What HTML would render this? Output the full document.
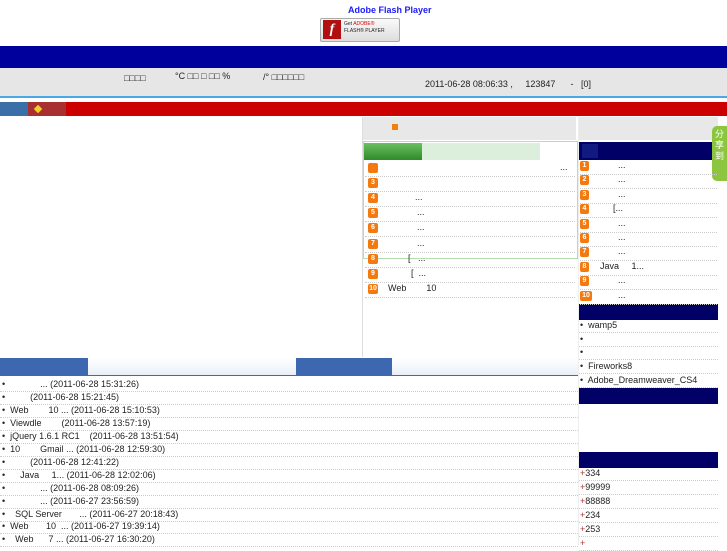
<!DOCTYPE html>
<html><head><meta charset="utf-8"><style>
*{margin:0;padding:0;box-sizing:border-box}
body{width:727px;height:545px;overflow:hidden;background:#fff;font-family:"Liberation Sans","Noto Sans CJK SC",sans-serif;font-size:9px;color:#222;position:relative}
.a{position:absolute}
.t{position:absolute;white-space:nowrap;font-size:9px;line-height:11px}
.num{position:absolute;width:10px;height:10px;background:#f47a10;border-radius:2px;color:#fff;font-size:7px;line-height:10px;text-align:center;font-weight:bold}
.dl{position:absolute;height:0;border-top:1px dotted #ccc}
.navy{position:absolute;background:#000066}
</style></head><body>
<div class="t" style="left:348px;top:5px;color:#1a1aff;font-weight:bold;font-size:9px">Adobe Flash Player</div>
<div class="a" style="left:320px;top:18px;width:80px;height:24px;background:linear-gradient(#fafafa,#ddd);border:1px solid #aaa;border-radius:2px"></div>
<div class="a" style="left:323px;top:20px;width:18px;height:19px;background:#b01010;color:#fff;font:italic bold 14px 'Liberation Serif',serif;text-align:center;line-height:19px">f</div>
<div class="t" style="left:344px;top:21px;font-size:5px;line-height:7px">Get <span style="color:#d00">ADOBE®</span><br>FLASH® PLAYER</div>
<div class="a" style="left:0;top:46px;width:727px;height:22px;background:#00009c"></div>
<div class="a" style="left:0;top:68px;width:727px;height:29px;background:#e6e6e6"></div>
<div class="a" style="left:0;top:96px;width:727px;height:2px;background:#4aa8e8"></div>
<div class="t" style="left:124px;top:73px">□□□□</div>
<div class="t" style="left:175px;top:71px">°C □□ □ □□ %</div>
<div class="t" style="left:263px;top:72px">/° □□□□□□</div>
<div class="t" style="left:425px;top:79px">2011-06-28 08:06:33 ,&nbsp;&nbsp;&nbsp;&nbsp; 123847 &nbsp;&nbsp;&nbsp;&nbsp; - &nbsp;&nbsp;[0]</div>
<div class="a" style="left:0;top:102px;width:727px;height:14px;background:#cc0000"></div>
<div class="a" style="left:0;top:102px;width:28px;height:14px;background:#3a6fa8"></div>
<div class="a" style="left:28px;top:102px;width:38px;height:14px;background:#a83030"></div>
<div class="a" style="left:35px;top:106px;width:6px;height:6px;background:#f0d020;transform:rotate(45deg)"></div>
<!-- left main -->
<div class="a" style="left:362px;top:117px;width:1px;height:240px;background:#ddd"></div>
<!-- middle column -->
<div class="a" style="left:363px;top:117px;width:213px;height:23px;background:#e8e8e8"></div>
<div class="a" style="left:392px;top:124px;width:6px;height:6px;background:#f08010"></div>
<div class="a" style="left:363px;top:141px;width:215px;height:118px;border:1px solid #b5deb0"></div>
<div class="a" style="left:364px;top:143px;width:176px;height:17px;background:#dcefdd"></div>
<div class="a" style="left:364px;top:143px;width:58px;height:17px;background:linear-gradient(#6cc060,#2e8a2a)"></div>
<div id="mid"></div>
<!-- right column -->
<div class="a" style="left:579px;top:117px;width:139px;height:23px;background:#e8e8e8"></div>
<div class="navy" style="left:579px;top:142px;width:139px;height:18px"></div>
<div class="a" style="left:582px;top:144px;width:16px;height:14px;background:#101a80"></div>
<div class="navy" style="left:579px;top:304px;width:139px;height:16px"></div>
<div class="navy" style="left:579px;top:388px;width:139px;height:16px"></div>
<div class="navy" style="left:579px;top:452px;width:139px;height:16px"></div>
<div class="a" style="left:578px;top:117px;width:1px;height:428px;background:#eee"></div>
<div class="a" style="left:712px;top:126px;width:15px;height:55px;background:#8cc63f;border-radius:5px 0 0 5px;color:#fff;font-size:9px;line-height:11px;text-align:center;padding-top:3px">分<br>享<br>到</div>
<!-- bottom tabs -->
<div class="a" style="left:0;top:358px;width:578px;height:18px;background:linear-gradient(#fff,#e8eef8)"></div>
<div class="a" style="left:0;top:375px;width:578px;height:1px;background:#3a6ab8"></div>
<div class="a" style="left:0;top:358px;width:88px;height:18px;background:#3d68b0"></div>
<div class="a" style="left:296px;top:358px;width:96px;height:18px;background:#3d68b0"></div>
<div id="gen"></div>
<script>
var h='';
var mid=[['',' ...',560],['','',0],['','...',415],['','...',417],['','...',417],['','...',417],['','[&nbsp;&nbsp; ...',408],['','[&nbsp; ...',411],['','Web&nbsp;&nbsp;&nbsp;&nbsp;&nbsp;&nbsp;&nbsp; 10',388]];
for(var i=0;i<9;i++){var y=163+i*15.1;
h+='<div class="num" style="left:368px;top:'+y+'px">'+(i==0?'':(i+2))+'</div>';
if(mid[i][1])h+='<div class="t" style="left:'+mid[i][2]+'px;top:'+(y-1)+'px">'+mid[i][1]+'</div>';
h+='<div class="dl" style="left:365px;top:'+(y+13)+'px;width:210px"></div>';}
var rt=['...','...','...','[...','...','...','...','Java&nbsp;&nbsp;&nbsp;&nbsp; 1...','...','...'];
var rx=[618,618,618,613,618,618,618,600,618,618];
for(var i=0;i<10;i++){var y=161+i*14.4;
h+='<div class="num" style="left:580px;top:'+y+'px;width:'+(i==9?12:9)+'px">'+(i+1)+'</div>';
h+='<div class="t" style="left:'+rx[i]+'px;top:'+(y-1)+'px">'+rt[i]+'</div>';
h+='<div class="dl" style="left:580px;top:'+(y+13)+'px;width:137px"></div>';}
var rl=['wamp5','','','Fireworks8','Adobe_Dreamweaver_CS4'];
for(var i=0;i<5;i++){var y=320+i*13.7;
h+='<div class="t" style="left:580px;top:'+y+'px">•&nbsp; '+rl[i]+'</div><div class="dl" style="left:579px;top:'+(y+12)+'px;width:139px"></div>';}
var pl=['+334','+99999','+88888','+234','+253','+'];
for(var i=0;i<6;i++){var y=468+i*13.9;
h+='<div class="t" style="left:580px;top:'+y+'px"><span style="color:#a33">+</span>'+pl[i].slice(1)+'</div><div class="dl" style="left:579px;top:'+(y+12)+'px;width:139px"></div>';}
var bl=['&nbsp;&nbsp;&nbsp;&nbsp;&nbsp;&nbsp;&nbsp;&nbsp;&nbsp;&nbsp;&nbsp; ... (2011-06-28 15:31:26)','&nbsp;&nbsp;&nbsp;&nbsp;&nbsp;&nbsp;&nbsp; (2011-06-28 15:21:45)','Web&nbsp;&nbsp;&nbsp;&nbsp;&nbsp;&nbsp;&nbsp; 10 ... (2011-06-28 15:10:53)','Viewdle&nbsp;&nbsp;&nbsp;&nbsp;&nbsp;&nbsp;&nbsp; (2011-06-28 13:57:19)','jQuery 1.6.1 RC1&nbsp;&nbsp;&nbsp; (2011-06-28 13:51:54)','10&nbsp;&nbsp;&nbsp;&nbsp;&nbsp;&nbsp;&nbsp; Gmail ... (2011-06-28 12:59:30)','&nbsp;&nbsp;&nbsp;&nbsp;&nbsp;&nbsp;&nbsp; (2011-06-28 12:41:22)','&nbsp;&nbsp;&nbsp; Java&nbsp;&nbsp;&nbsp;&nbsp; 1... (2011-06-28 12:02:06)','&nbsp;&nbsp;&nbsp;&nbsp;&nbsp;&nbsp;&nbsp;&nbsp;&nbsp;&nbsp;&nbsp; ... (2011-06-28 08:09:26)','&nbsp;&nbsp;&nbsp;&nbsp;&nbsp;&nbsp;&nbsp;&nbsp;&nbsp;&nbsp;&nbsp; ... (2011-06-27 23:56:59)','&nbsp; SQL Server&nbsp;&nbsp;&nbsp;&nbsp;&nbsp;&nbsp; ... (2011-06-27 20:18:43)','Web&nbsp;&nbsp;&nbsp;&nbsp;&nbsp;&nbsp; 10&nbsp; ... (2011-06-27 19:39:14)','&nbsp; Web&nbsp;&nbsp;&nbsp;&nbsp;&nbsp; 7 ... (2011-06-27 16:30:20)'];
for(var i=0;i<13;i++){var y=379+i*12.95;
h+='<div class="t" style="left:2px;top:'+y+'px">•&nbsp; '+bl[i]+'</div><div class="dl" style="left:0;top:'+(y+12)+'px;width:578px"></div>';}
document.getElementById('gen').innerHTML=h;
</script>
</body></html>
